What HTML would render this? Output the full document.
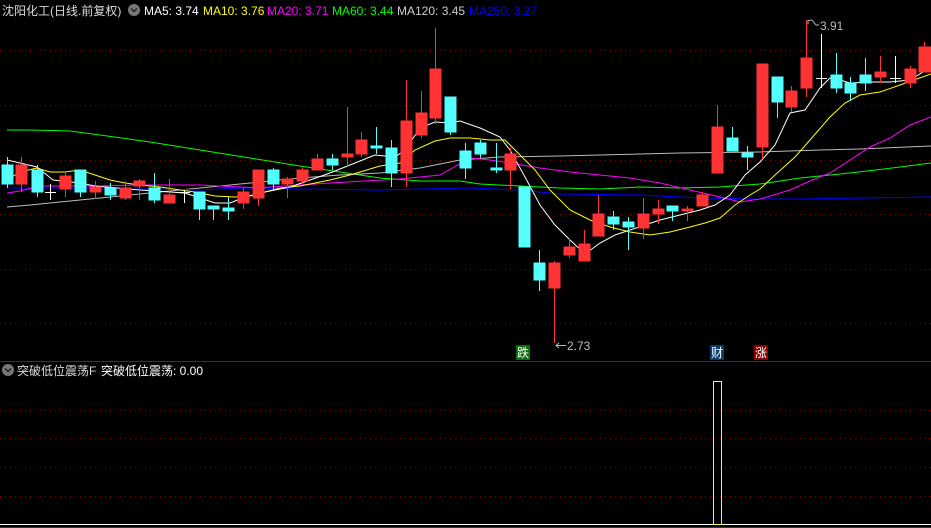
<!DOCTYPE html>
<html><head><meta charset="utf-8"><style>
html,body{margin:0;padding:0;background:#000;width:931px;height:528px;overflow:hidden}
svg{display:block}
text{font-family:"Liberation Sans","Noto Sans CJK SC",sans-serif;font-size:12px}
</style></head><body>
<svg width="931" height="528" viewBox="0 0 931 528" xmlns="http://www.w3.org/2000/svg">
<rect width="931" height="528" fill="#000"/>
<g stroke="#8a0000" stroke-width="1" stroke-dasharray="1,4">
<line x1="0" y1="50.5" x2="931" y2="50.5"/><line x1="0" y1="105.5" x2="931" y2="105.5"/>
<line x1="0" y1="160.5" x2="931" y2="160.5"/><line x1="0" y1="214.5" x2="931" y2="214.5"/>
<line x1="0" y1="269.5" x2="931" y2="269.5"/><line x1="0" y1="323.5" x2="931" y2="323.5"/>
<line x1="0" y1="410.5" x2="931" y2="410.5"/><line x1="0" y1="438.5" x2="931" y2="438.5"/>
<line x1="0" y1="467.5" x2="931" y2="467.5"/><line x1="0" y1="496.5" x2="931" y2="496.5"/>
</g>
<line x1="0" y1="361.5" x2="931" y2="361.5" stroke="#b00000"/>
<line x1="0" y1="524.5" x2="931" y2="524.5" stroke="#fff"/>
<line x1="0" y1="527.5" x2="931" y2="527.5" stroke="#b00000"/>
<!-- MA lines -->
<g fill="none" stroke-width="1">
<polyline stroke="#00ff00" points="7,130 30,130 70,131 100,135 150,142 200,150 250,158 300,166 340,172 380,178 420,181 460,181 480,184 520,186 560,188 600,189 640,187 680,188 720,187 760,184 800,178 850,173 900,167 931,163"/>
<polyline stroke="#bbbbbb" points="7,207 30,205 60,202 100,198 150,193 200,188 230,185 260,182 300,178 340,175 380,173 420,168 460,160 500,157 560,156 600,155 680,153 760,152 820,150 860,149 931,146"/>
<polyline stroke="#0000ff" points="7,188 60,188 100,189 160,189 200,190 240,188 300,189 380,190 420,189 470,188 520,190 560,194 640,195 700,198 760,199 800,199 860,198 931,197"/>
<polyline stroke="#ff00ff" points="7,193 20,191 40,186 100,186 135,185 200,185 260,188 270,187 330,183 400,179 440,175 470,158 490,160 510,163 540,168 570,172 600,175 630,178 660,183 690,190 720,197 740,202 760,199 790,190 810,181 830,173 850,160 870,147 890,138 910,125 931,117"/>
<polyline stroke="#ffff00" points="7,180 20,172 37,168 50,172 65,172 80,170 95,175 110,180 125,183 140,185 160,187 180,190 195,192 215,196 235,197 250,196 265,192 280,188 300,186 315,183 330,180 350,175 380,166 400,163 415,150 435,141 450,138 470,138 490,140 505,140 520,155 535,170 550,190 570,210 590,220 610,227 630,232 650,235 670,232 690,227 705,223 720,218 735,205 750,195 760,189 775,175 795,157 810,140 830,117 845,103 860,95 880,92 900,85 931,74"/>
<polyline stroke="#ffffff" points="7,160 37,167 53,180 80,183 95,186 140,190 185,193 200,198 215,203 230,203 245,197 260,193 290,187 310,180 330,173 360,161 375,155 395,157 405,150 420,128 435,122 450,123 460,121 480,128 500,137 510,150 525,177 540,205 555,225 570,240 585,254 600,243 615,235 630,230 645,225 660,220 680,215 700,210 715,205 730,195 745,175 760,162 775,145 790,113 805,110 820,88 830,78 840,80 850,83 870,82 890,82 910,80 931,67"/>
</g>
<!-- candles -->
<g stroke-width="1">
<g stroke="#54ffff" fill="#54ffff">
<line x1="7.5" y1="157" x2="7.5" y2="188"/><rect x="2" y="165" width="11" height="19"/>
<line x1="37.5" y1="165" x2="37.5" y2="197"/><rect x="32" y="170" width="11" height="22"/>
<line x1="80.5" y1="170" x2="80.5" y2="197"/><rect x="75" y="170" width="11" height="22"/>
<line x1="110.5" y1="183" x2="110.5" y2="200"/><rect x="105" y="188" width="11" height="7"/>
<line x1="154.5" y1="173" x2="154.5" y2="203"/><rect x="149" y="188" width="11" height="12"/>
<line x1="199.5" y1="192" x2="199.5" y2="220"/><rect x="194" y="192" width="11" height="17"/>
<line x1="213.5" y1="206" x2="213.5" y2="220"/><rect x="208" y="206" width="11" height="3"/>
<line x1="228.5" y1="197" x2="228.5" y2="220"/><rect x="223" y="208" width="11" height="3"/>
<line x1="273.5" y1="168" x2="273.5" y2="189"/><rect x="268" y="170" width="11" height="14"/>
<line x1="332.5" y1="154" x2="332.5" y2="170"/><rect x="327" y="159" width="11" height="6"/>
<line x1="376.5" y1="127" x2="376.5" y2="154"/><rect x="371" y="146" width="11" height="2"/>
<line x1="391.5" y1="140" x2="391.5" y2="187"/><rect x="386" y="148" width="11" height="25"/>
<line x1="450.5" y1="97" x2="450.5" y2="135"/><rect x="445" y="97" width="11" height="35"/>
<line x1="465.5" y1="143" x2="465.5" y2="179"/><rect x="460" y="151" width="11" height="17"/>
<line x1="480.5" y1="140" x2="480.5" y2="158"/><rect x="475" y="143" width="11" height="11"/>
<line x1="496.5" y1="143" x2="496.5" y2="173"/><rect x="491" y="168" width="11" height="2"/>
<rect x="519" y="187" width="11" height="60"/>
<line x1="539.5" y1="250" x2="539.5" y2="291"/><rect x="534" y="263" width="11" height="17"/>
<line x1="613.5" y1="211" x2="613.5" y2="230"/><rect x="608" y="217" width="11" height="7"/>
<line x1="628.5" y1="217" x2="628.5" y2="250"/><rect x="623" y="222" width="11" height="5"/>
<line x1="672.5" y1="206" x2="672.5" y2="221"/><rect x="667" y="206" width="11" height="5"/>
<line x1="732.5" y1="127" x2="732.5" y2="151"/><rect x="727" y="138" width="11" height="13"/>
<line x1="747.5" y1="146" x2="747.5" y2="170"/><rect x="742" y="153" width="11" height="4"/>
<line x1="777.5" y1="77" x2="777.5" y2="118"/><rect x="772" y="77" width="11" height="25"/>
<line x1="836.5" y1="53" x2="836.5" y2="93"/><rect x="831" y="75" width="11" height="13"/>
<line x1="850.5" y1="77" x2="850.5" y2="101"/><rect x="845" y="83" width="11" height="10"/>
<line x1="865.5" y1="58" x2="865.5" y2="91"/><rect x="860" y="75" width="11" height="8"/>
</g>
<g stroke="#ff3333" fill="#ff3333">
<line x1="21.5" y1="157" x2="21.5" y2="192"/><rect x="16" y="165" width="11" height="19"/>
<line x1="65.5" y1="173" x2="65.5" y2="197"/><rect x="60" y="176" width="11" height="13"/>
<line x1="95.5" y1="181" x2="95.5" y2="199"/><rect x="90" y="187" width="11" height="5"/>
<line x1="125.5" y1="181" x2="125.5" y2="200"/><rect x="120" y="188" width="11" height="10"/>
<line x1="139.5" y1="179" x2="139.5" y2="200"/><rect x="134" y="181" width="11" height="5"/>
<line x1="169.5" y1="179" x2="169.5" y2="203"/><rect x="164" y="195" width="11" height="8"/>
<line x1="243.5" y1="188" x2="243.5" y2="209"/><rect x="238" y="192" width="11" height="11"/>
<line x1="258.5" y1="170" x2="258.5" y2="206"/><rect x="253" y="170" width="11" height="28"/>
<line x1="287.5" y1="177" x2="287.5" y2="198"/><rect x="282" y="179" width="11" height="5"/>
<line x1="302.5" y1="168" x2="302.5" y2="184"/><rect x="297" y="170" width="11" height="11"/>
<line x1="317.5" y1="154" x2="317.5" y2="170"/><rect x="312" y="159" width="11" height="11"/>
<line x1="347.5" y1="107" x2="347.5" y2="167"/><rect x="342" y="154" width="11" height="3"/>
<line x1="361.5" y1="132" x2="361.5" y2="157"/><rect x="356" y="140" width="11" height="14"/>
<line x1="406.5" y1="80" x2="406.5" y2="187"/><rect x="401" y="121" width="11" height="52"/>
<line x1="421.5" y1="91" x2="421.5" y2="138"/><rect x="416" y="113" width="11" height="22"/>
<line x1="435.5" y1="28" x2="435.5" y2="124"/><rect x="430" y="69" width="11" height="49"/>
<line x1="510.5" y1="148" x2="510.5" y2="189"/><rect x="505" y="154" width="11" height="16"/>
<line x1="554.5" y1="261" x2="554.5" y2="343"/><rect x="549" y="263" width="11" height="25"/>
<line x1="569.5" y1="239" x2="569.5" y2="258"/><rect x="564" y="247" width="11" height="8"/>
<line x1="584.5" y1="230" x2="584.5" y2="261"/><rect x="579" y="244" width="11" height="17"/>
<line x1="598.5" y1="195" x2="598.5" y2="236"/><rect x="593" y="214" width="11" height="22"/>
<line x1="643.5" y1="198" x2="643.5" y2="239"/><rect x="638" y="214" width="11" height="14"/>
<line x1="658.5" y1="200" x2="658.5" y2="224"/><rect x="653" y="209" width="11" height="5"/>
<line x1="687.5" y1="206" x2="687.5" y2="221"/><rect x="682" y="209" width="11" height="2"/>
<line x1="702.5" y1="192" x2="702.5" y2="206"/><rect x="697" y="195" width="11" height="11"/>
<line x1="717.5" y1="105" x2="717.5" y2="173"/><rect x="712" y="127" width="11" height="46"/>
<line x1="762.5" y1="64" x2="762.5" y2="159"/><rect x="757" y="64" width="11" height="83"/>
<line x1="791.5" y1="86" x2="791.5" y2="112"/><rect x="786" y="91" width="11" height="16"/>
<line x1="806.5" y1="20" x2="806.5" y2="97"/><rect x="801" y="58" width="11" height="30"/>
<line x1="880.5" y1="56" x2="880.5" y2="83"/><rect x="875" y="72" width="11" height="5"/>
<line x1="910.5" y1="66" x2="910.5" y2="88"/><rect x="905" y="69" width="11" height="14"/>
<line x1="924.5" y1="42" x2="924.5" y2="72"/><rect x="919" y="47" width="12" height="25"/>
</g>
<g stroke="#ffffff">
<line x1="50.5" y1="184" x2="50.5" y2="200"/><line x1="45" y1="192.5" x2="56" y2="192.5"/>
<line x1="184.5" y1="190" x2="184.5" y2="203"/><line x1="179" y1="192.5" x2="190" y2="192.5"/>
<line x1="821.5" y1="34" x2="821.5" y2="88"/><line x1="816" y1="78.5" x2="827" y2="78.5"/>
<line x1="895.5" y1="56" x2="895.5" y2="83"/><line x1="890" y1="78.5" x2="901" y2="78.5"/>
</g>
</g>
<!-- price labels -->
<g stroke="#bbb" fill="none"><path d="M556 345.5 H566 M559 343 L556 345.5 L559 348"/><path d="M808 20.5 L812 20 L816 25 H819 M808 20 V24"/></g>
<text x="567" y="350" fill="#bbb">2.73</text>
<text x="820" y="30" fill="#bbb">3.91</text>
<!-- markers -->
<rect x="516" y="345" width="14" height="15" fill="#0a6e0a"/><text x="517" y="357" fill="#fff">跌</text>
<rect x="710" y="345" width="14" height="15" fill="#0a3a6e"/><text x="711" y="357" fill="#fff">财</text>
<rect x="754" y="345" width="14" height="15" fill="#8a0000"/><text x="755" y="357" fill="#fff">涨</text>
<!-- bottom bar -->
<rect x="713.5" y="381.5" width="8" height="143" fill="none" stroke="#ffff00"/>
<!-- legends -->
<circle cx="134" cy="10" r="6" fill="#777"/><path d="M131 8.5 L134 11.5 L137 8.5" stroke="#222" stroke-width="1.5" fill="none"/>
<text x="2" y="15" fill="#ddd">沈阳化工(日线.前复权)</text>
<text x="144" y="15" fill="#fff">MA5: 3.74</text>
<text x="203" y="15" fill="#ffff00">MA10: 3.76</text>
<text x="267" y="15" fill="#ff00ff">MA20: 3.71</text>
<text x="332" y="15" fill="#00ff00">MA60: 3.44</text>
<text x="397" y="15" fill="#ccc">MA120: 3.45</text>
<text x="469" y="15" fill="#0000ff">MA250: 3.27</text>
<circle cx="8" cy="370" r="6" fill="#777"/><path d="M5 368.5 L8 371.5 L11 368.5" stroke="#222" stroke-width="1.5" fill="none"/>
<text x="17" y="375" fill="#ddd">突破低位震荡F</text>
<text x="101" y="375" fill="#fff">突破低位震荡: 0.00</text>
</svg>
</body></html>
